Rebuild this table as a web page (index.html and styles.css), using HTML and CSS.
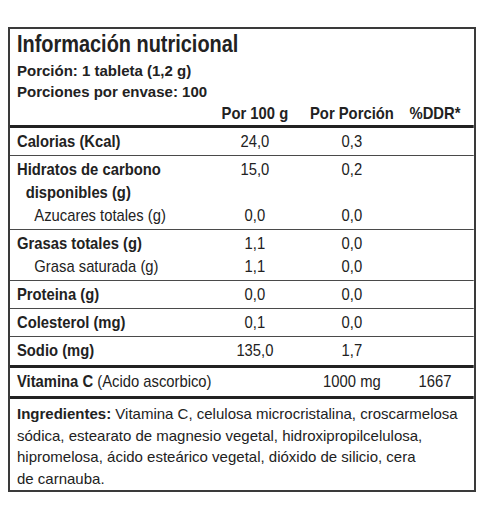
FILE: index.html
```html
<!DOCTYPE html>
<html lang="es">
<head>
    <meta charset="UTF-8">
    <meta name="viewport" content="width=device-width, initial-scale=1.0">
    <title>Información nutricional</title>
    <link rel="stylesheet" href="styles.css">
</head>
<body>
    <div class="etiqueta">
        <div class="cabecera">
            <h1>Información nutricional</h1>
            <p>Porción: 1 tableta (1,2 g)</p>
            <p>Porciones por envase: 100</p>
        </div>

        <div class="fila titulos gruesa">
            <div></div>
            <div class="col">Por 100 g</div>
            <div class="col">Por Porción</div>
            <div class="col">%DDR*</div>
        </div>

        <div class="fila">
            <div class="nombre">Calorias (Kcal)</div>
            <div class="col">24,0</div>
            <div class="col">0,3</div>
            <div class="col"></div>
        </div>

        <div class="fila">
            <div class="nombre">Hidratos de carbono<br><span class="sangria">disponibles (g)</span><br><span class="sub">Azucares totales (g)</span></div>
            <div class="col">15,0<br><br>0,0</div>
            <div class="col">0,2<br><br>0,0</div>
            <div class="col"></div>
        </div>

        <div class="fila">
            <div class="nombre">Grasas totales (g)<br><span class="sub">Grasa saturada (g)</span></div>
            <div class="col">1,1<br>1,1</div>
            <div class="col">0,0<br>0,0</div>
            <div class="col"></div>
        </div>

        <div class="fila">
            <div class="nombre">Proteina (g)</div>
            <div class="col">0,0</div>
            <div class="col">0,0</div>
            <div class="col"></div>
        </div>

        <div class="fila">
            <div class="nombre">Colesterol (mg)</div>
            <div class="col">0,1</div>
            <div class="col">0,0</div>
            <div class="col"></div>
        </div>

        <div class="fila gruesa">
            <div class="nombre">Sodio (mg)</div>
            <div class="col">135,0</div>
            <div class="col">1,7</div>
            <div class="col"></div>
        </div>

        <div class="fila gruesa">
            <div class="nombre doble">Vitamina C <span class="normal">(Acido ascorbico)</span></div>
            <div class="col">1000 mg</div>
            <div class="col">1667</div>
        </div>

        <div class="ingredientes">
            <b>Ingredientes:</b> Vitamina C, celulosa microcristalina, croscarmelosa<br>
            sódica, estearato de magnesio vegetal, hidroxipropilcelulosa,<br>
            hipromelosa, ácido esteárico vegetal, dióxido de silicio, cera<br>
            de carnauba.
        </div>
    </div>
</body>
</html>
```

FILE: styles.css
```css
*
{
    box-sizing: border-box;
}

body
{
    margin: 0;
    background-color: white;
    font-family: "Liberation Sans", Arial, sans-serif;
    color: #222;
}

.etiqueta
{
    width: 468px;
    margin: 27px 0 0 8px;
    border: 2px solid #3a3a3a;
}

.cabecera
{
    padding: 2px 9px 0 7px;
}

/* la letra original es condensada: se estrecha en horizontal */
.cabecera h1
{
    margin: 0 0 3px 0;
    font-size: 23px;
    line-height: 26px;
    font-weight: bold;
    transform: scaleX(0.866);
    transform-origin: left;
}

.cabecera p
{
    margin: 0;
    font-size: 15px;
    line-height: 21px;
    font-weight: bold;
}

.fila
{
    display: grid;
    grid-template-columns: 230px 103px 120px 71px;
    width: 533px;
    padding: 2px 0 2px 0;
    font-size: 17px;
    line-height: 23px;
    border-bottom: 1px solid #4a4a4a;
    transform: scaleX(0.87);
    transform-origin: left;
}

.fila.titulos
{
    padding: 0;
    line-height: 22px;
    font-weight: bold;
    margin-top: 1px;
}

.fila.gruesa
{
    padding-bottom: 3px;
    border-bottom: 3px solid #222;
}

.fila.titulos.gruesa
{
    padding-bottom: 0;
}

.nombre
{
    padding-left: 8px;
    font-weight: bold;
}

.nombre.doble
{
    grid-column: span 2;
}

.sangria
{
    padding-left: 10px;
}

.sub
{
    padding-left: 20px;
    font-weight: normal;
}

.normal
{
    font-weight: normal;
}

.col
{
    text-align: center;
}

.ingredientes
{
    padding: 4px 7px 1px 7px;
    font-size: 15px;
    line-height: 21.5px;
}
```
